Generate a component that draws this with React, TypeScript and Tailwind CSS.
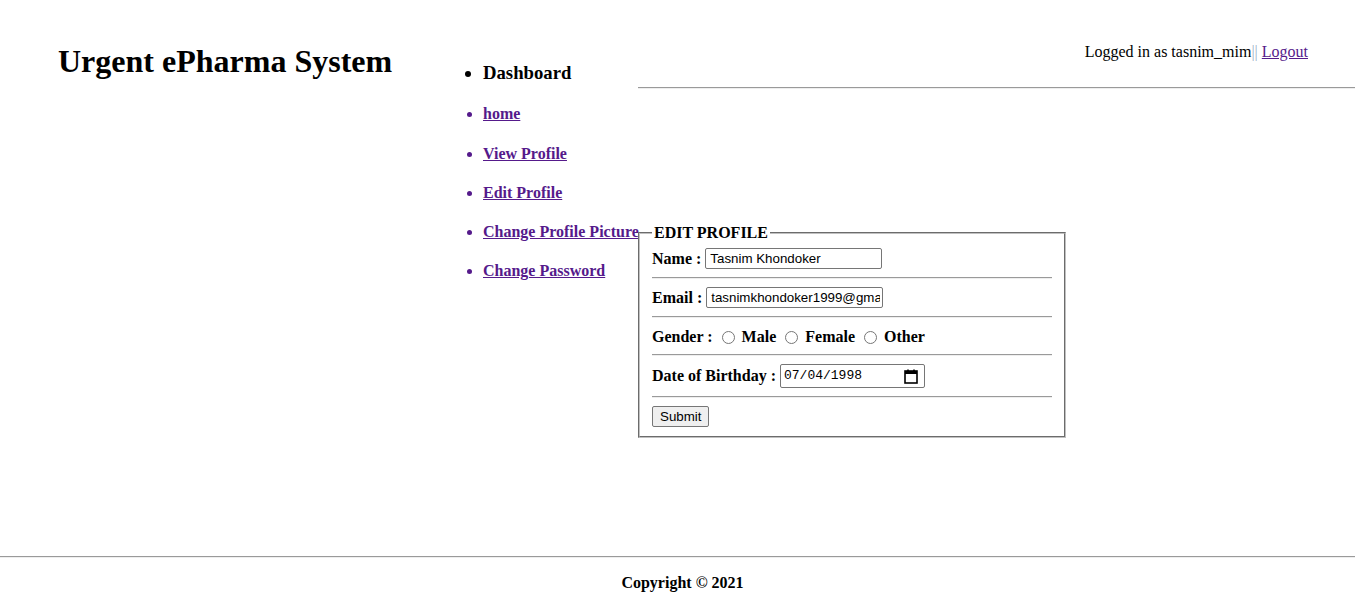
import React from 'react';

const navLinks = ['home', 'View Profile', 'Edit Profile', 'Change Profile Picture', 'Change Password'];

const Divider = () => (
  <div className="my-[8px] h-0 border-t border-b border-t-[#9a9a9a] border-b-[#eeeeee]" />
);

const CalendarIcon = () => (
  <svg width="14" height="15" viewBox="0 0 14 15" fill="none">
    <rect x="1" y="2" width="12" height="12" stroke="#000" strokeWidth="1.6" />
    <rect x="1" y="2" width="12" height="3" fill="#000" />
    <rect x="3.2" y="0.5" width="1.6" height="2.5" fill="#000" />
    <rect x="9.2" y="0.5" width="1.6" height="2.5" fill="#000" />
  </svg>
);

export default function App() {
  return (
    <div className="min-h-[608px] bg-white text-black" style={{ fontFamily: '"Liberation Serif", "Times New Roman", serif' }}>
      <div className="flex h-[556px]">
        {/* title column */}
        <div className="w-[443px] shrink-0 pl-[58px] pt-[43px]">
          <h1 className="text-[32px] leading-[36px] font-bold">Urgent ePharma System</h1>
        </div>

        {/* navigation column */}
        <div className="w-[195px] shrink-0 whitespace-nowrap">
          <ul className="list-disc pl-[40px] pt-[62px] flex flex-col gap-[21.3px]">
            <li className="text-[18.72px] leading-[22px] font-bold">Dashboard</li>
            {navLinks.map((l) => (
              <li key={l} className="text-[16px] leading-[18px] font-bold text-[#551a8b]">
                <a href="#" className="underline text-[#551a8b]">{l}</a>
              </li>
            ))}
          </ul>
        </div>

        {/* content column */}
        <div className="flex-1 flex flex-col">
          <div className="pt-[43px] pr-[47px] text-right text-[16px] leading-[18px]">
            Logged in as tasnim_mim<span className="text-[#9ab0c8]">||</span>{' '}
            <a href="#" className="underline text-[#551a8b]">Logout</a>
          </div>
          <div className="mt-[26px] h-0 border-t border-b border-t-[#9a9a9a] border-b-[#eeeeee]" />

          <fieldset className="mt-[135px] w-[428px] border-2 [border-style:groove] border-[#c0c0c0] px-[12px] pt-[6px] pb-[9px]">
            <legend className="px-[2px] text-[16px] leading-[18px] font-bold">EDIT PROFILE</legend>

            <div className="flex items-center h-[21px] text-[16px] font-bold">
              <span>Name :</span>
              <input
                type="text"
                defaultValue="Tasnim Khondoker"
                className="ml-[4px] w-[177px] h-[21px] border border-[#767676] rounded-[2px] pl-[4px] pr-[2px] text-[13.33px] font-normal outline-none"
                style={{ fontFamily: '"Liberation Sans", Arial, sans-serif' }}
              />
            </div>
            <Divider />

            <div className="flex items-center h-[21px] text-[16px] font-bold">
              <span>Email :</span>
              <input
                type="text"
                defaultValue="tasnimkhondoker1999@gmail.com"
                className="ml-[4px] w-[177px] h-[21px] border border-[#767676] rounded-[2px] pl-[4px] pr-[2px] text-[13.33px] font-normal outline-none"
                style={{ fontFamily: '"Liberation Sans", Arial, sans-serif' }}
              />
            </div>
            <Divider />

            <div className="flex items-center h-[20px] pt-[2px] text-[16px] font-bold">
              <span>Gender :</span>
              <input type="radio" name="gender" className="m-0 ml-[9px] mr-[7px] w-[13px] h-[13px]" />
              <span>Male</span>
              <input type="radio" name="gender" className="m-0 ml-[9px] mr-[7px] w-[13px] h-[13px]" />
              <span>Female</span>
              <input type="radio" name="gender" className="m-0 ml-[9px] mr-[7px] w-[13px] h-[13px]" />
              <span>Other</span>
            </div>
            <Divider />

            <div className="flex items-center h-[24px] text-[16px] font-bold">
              <span>Date of Birthday :</span>
              <div className="ml-[4px] w-[145px] h-[24px] border border-[#767676] rounded-[2px] flex items-center justify-between pl-[3px] pr-[6px]">
                <span className="text-[13px] font-normal" style={{ fontFamily: '"Liberation Mono", "Courier New", monospace' }}>
                  07/04/1998
                </span>
                <CalendarIcon />
              </div>
            </div>
            <Divider />

            <div className="flex">
              <button
                type="button"
                className="h-[21px] px-[7px] bg-[#efefef] border border-[#767676] rounded-[2px] text-[13.33px] leading-[16px]"
                style={{ fontFamily: '"Liberation Sans", Arial, sans-serif' }}
              >
                Submit
              </button>
            </div>
          </fieldset>
        </div>
      </div>

      <div className="h-0 border-t border-b border-t-[#9a9a9a] border-b-[#eeeeee]" />
      <p className="mt-[16px] pl-[10px] text-center text-[16px] leading-[18px] font-bold">Copyright © 2021</p>
    </div>
  );
}
